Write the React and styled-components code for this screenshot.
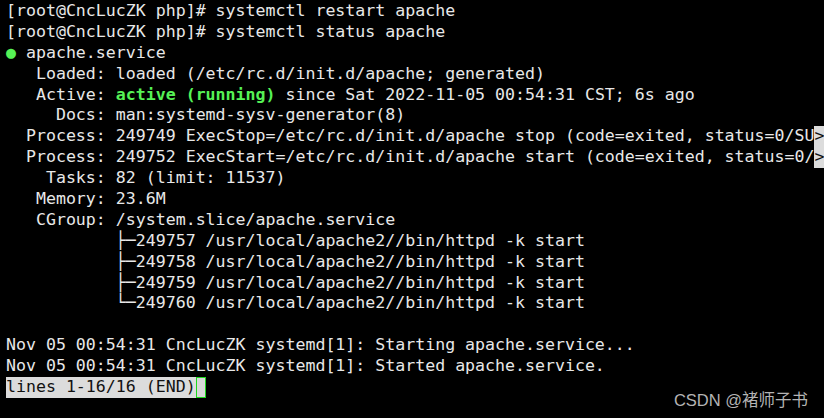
import React from "react";
import styled, { createGlobalStyle } from "styled-components";

const Global = createGlobalStyle`
  html, body { margin: 0; padding: 0; background: #000; }
  body { width: 824px; height: 418px; overflow: hidden; }
`;

const Screen = styled.div`
  position: relative;
  width: 824px;
  height: 418px;
  background: #000;
  overflow: hidden;
  box-sizing: border-box;
  padding: 1px 0 0 6px;
`;

const Term = styled.pre`
  margin: 0;
  font-family: "DejaVu Sans Mono", monospace;
  font-size: 16.58px;
  line-height: 20.9px;
  color: #e8e8e8;
  white-space: pre;
`;

const Line = styled.div`
  height: 20.9px;
`;

const Green = styled.span`
  color: #56f256;
  font-weight: ${(p) => (p.$bold ? 700 : 400)};
`;

const Rev = styled.span`
  display: inline-block;
  height: 21px;
  vertical-align: top;
  background: #dcdcdc;
  color: #111;
`;

const Cursor = styled.span`
  display: inline-block;
  width: 10px;
  height: 21px;
  vertical-align: top;
  box-sizing: border-box;
  border: 1.5px solid #1ed81e;
  background: #d8d8d8;
`;

const Watermark = styled.div`
  position: absolute;
  right: 16px;
  bottom: 7px;
  font-family: "Liberation Sans", "Noto Sans CJK SC", sans-serif;
  font-size: 16.5px;
  color: #b4b4b4;
`;

export default function App() {
  return (
    <>
      <Global />
      <Screen>
        <Term>
          <Line>[root@CncLucZK php]# systemctl restart apache</Line>
          <Line>[root@CncLucZK php]# systemctl status apache</Line>
          <Line><Green>●</Green> apache.service</Line>
          <Line>   Loaded: loaded (/etc/rc.d/init.d/apache; generated)</Line>
          <Line>   Active: <Green $bold>active (running)</Green> since Sat 2022-11-05 00:54:31 CST; 6s ago</Line>
          <Line>     Docs: man:systemd-sysv-generator(8)</Line>
          <Line>  Process: 249749 ExecStop=/etc/rc.d/init.d/apache stop (code=exited, status=0/SU<Rev>&gt;</Rev></Line>
          <Line>  Process: 249752 ExecStart=/etc/rc.d/init.d/apache start (code=exited, status=0/<Rev>&gt;</Rev></Line>
          <Line>    Tasks: 82 (limit: 11537)</Line>
          <Line>   Memory: 23.6M</Line>
          <Line>   CGroup: /system.slice/apache.service</Line>
          <Line>           ├─249757 /usr/local/apache2//bin/httpd -k start</Line>
          <Line>           ├─249758 /usr/local/apache2//bin/httpd -k start</Line>
          <Line>           ├─249759 /usr/local/apache2//bin/httpd -k start</Line>
          <Line>           └─249760 /usr/local/apache2//bin/httpd -k start</Line>
          <Line> </Line>
          <Line>Nov 05 00:54:31 CncLucZK systemd[1]: Starting apache.service...</Line>
          <Line>Nov 05 00:54:31 CncLucZK systemd[1]: Started apache.service.</Line>
          <Line><Rev>lines 1-16/16 (END)</Rev><Cursor /></Line>
        </Term>
        <Watermark>CSDN @褚师子书</Watermark>
      </Screen>
    </>
  );
}
